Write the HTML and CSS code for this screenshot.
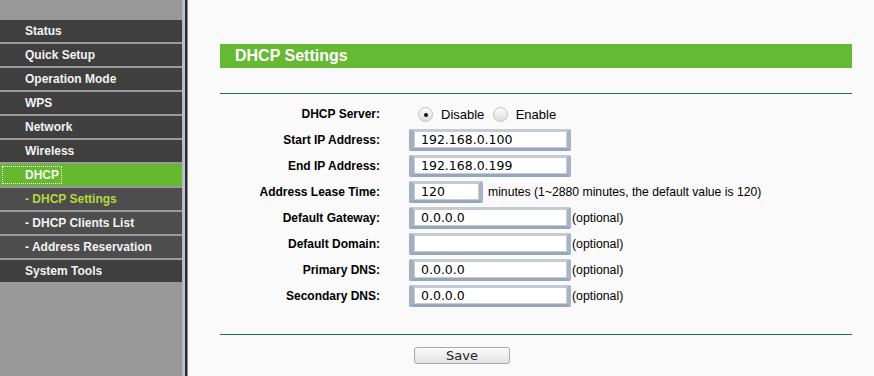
FILE: index.html
```html
<!DOCTYPE html>
<html lang="en">
<head>
  <meta charset="UTF-8">
  <title>DHCP Settings</title>
  <link rel="stylesheet" href="styles.css">
</head>
<body>
  <div class="page">
    <div class="sidebar">
      <ul class="menu">
        <li class="item">Status</li>
        <li class="item">Quick Setup</li>
        <li class="item">Operation Mode</li>
        <li class="item">WPS</li>
        <li class="item">Network</li>
        <li class="item">Wireless</li>
        <li class="item active"><span class="focus">DHCP</span></li>
        <li class="item sub current">- DHCP Settings</li>
        <li class="item sub">- DHCP Clients List</li>
        <li class="item sub">- Address Reservation</li>
        <li class="item">System Tools</li>
      </ul>
    </div>
    <div class="edge"></div>

    <div class="main">
      <div class="title">DHCP Settings</div>
      <hr class="rule">

      <table class="form">
        <tr>
          <td class="label">DHCP Server:</td>
          <td class="value">
            <span class="radio first checked"></span><span class="rtext">Disable</span>
            <span class="radio"></span><span class="rtext">Enable</span>
          </td>
        </tr>
        <tr>
          <td class="label">Start IP Address:</td>
          <td class="value"><input class="field" value="192.168.0.100"></td>
        </tr>
        <tr>
          <td class="label">End IP Address:</td>
          <td class="value"><input class="field" value="192.168.0.199"></td>
        </tr>
        <tr>
          <td class="label">Address Lease Time:</td>
          <td class="value"><input class="field short" value="120"><span class="hint">minutes (1~2880 minutes, the default value is 120)</span></td>
        </tr>
        <tr>
          <td class="label">Default Gateway:</td>
          <td class="value"><input class="field" value="0.0.0.0"><span class="opt">(optional)</span></td>
        </tr>
        <tr>
          <td class="label">Default Domain:</td>
          <td class="value"><input class="field" value=""><span class="opt">(optional)</span></td>
        </tr>
        <tr>
          <td class="label">Primary DNS:</td>
          <td class="value"><input class="field" value="0.0.0.0"><span class="opt">(optional)</span></td>
        </tr>
        <tr>
          <td class="label">Secondary DNS:</td>
          <td class="value"><input class="field" value="0.0.0.0"><span class="opt">(optional)</span></td>
        </tr>
      </table>

      <hr class="rule bottom">
      <div class="actions">
        <button class="save">Save</button>
      </div>
    </div>
  </div>
</body>
</html>
```

FILE: styles.css
```css
html, body {
  margin: 0;
  padding: 0;
  height: 100%;
}
body {
  background-color: #fafafa;
  font-family: 'Liberation Sans', Arial, sans-serif;
  font-size: 12px;
  color: #000;
  overflow: hidden;
}
.page {
  display: flex;
  height: 376px;
}
.sidebar {
  width: 182px;
  background-color: #999999;
  padding-top: 20px;
  box-sizing: border-box;
}
.menu {
  list-style: none;
  margin: 0;
  padding: 0;
}
.item {
  height: 22px;
  line-height: 22px;
  margin-bottom: 2px;
  padding-left: 25px;
  background-color: #3f3f3f;
  color: #f2f2f2;
  font-weight: bold;
  font-size: 12px;
}
.item.sub {
  background-color: #4d4d4d;
}
.item.current {
  color: #b6d73c;
}
.item.active {
  background-color: #66b92f;
  padding-left: 2px;
}
.focus {
  display: inline-block;
  height: 16px;
  line-height: 16px;
  padding: 0 2px 0 22px;
  border: 1px dotted #ffffff;
}
.edge {
  width: 6px;
  background: linear-gradient(to right, #b5b5b5 0, #b5b5b5 1px, #bcc3d0 1px, #bcc3d0 3px, #2e2e2e 3px, #2e2e2e 5px, #8a8a8a 5px);
}
.main {
  flex: 1;
  padding: 44px 22px 0 32px;
}
.title {
  height: 24px;
  line-height: 24px;
  background-color: #66b933;
  color: #ffffff;
  font-weight: bold;
  font-size: 16px;
  padding-left: 15px;
}
.rule {
  border: none;
  border-top: 1px solid #167a3e;
  margin: 25px 0 0 0;
  height: 0;
}
.rule.bottom {
  margin-top: 25px;
}
.form {
  border-collapse: collapse;
  margin-top: 7px;
}
.form td {
  padding: 0;
  height: 26px;
}
.label {
  width: 160px;
  text-align: right;
  font-weight: bold;
  padding-right: 29px !important;
}
.value {
  white-space: nowrap;
  font-size: 12px;
}
.field {
  width: 162px;
  height: 22px;
  box-sizing: border-box;
  border-style: solid;
  border-width: 2px 4px 3px 5px;
  border-color: #c2cad6 #a8b4c6 #98a6ba #a4b0c2;
  border-radius: 2px;
  background-color: #ffffff;
  box-shadow: inset 0 0 0 1px #c6ccd4;
  padding: 0 0 0 7px;
  font-family: 'DejaVu Sans', sans-serif;
  font-size: 12.5px;
  color: #000;
  vertical-align: middle;
}
.field.short {
  width: 74px;
  margin-right: 5px;
}
.opt {
  vertical-align: middle;
  margin-left: 1px;
  font-size: 12.3px;
}
.hint {
  vertical-align: middle;
  font-size: 12.2px;
}
.radio {
  display: inline-block;
  width: 15px;
  height: 15px;
  border-radius: 50%;
  box-sizing: border-box;
  border: 1px solid #c4c4c4;
  background: linear-gradient(#fdfdfd, #dcdcdc);
  vertical-align: middle;
  position: relative;
  margin-left: 5px;
}
.radio.first {
  margin-left: 9px;
}
.radio.checked::after {
  content: "";
  position: absolute;
  left: 5px;
  top: 5px;
  width: 4px;
  height: 4px;
  border-radius: 50%;
  background-color: #111;
}
.rtext {
  font-size: 13px;
  vertical-align: middle;
  margin-left: 8px;
}
.actions {
  padding: 12px 0 0 194px;
}
.save {
  width: 96px;
  height: 17px;
  padding: 1px 0 0 0;
  border: 1px solid #a8a8a8;
  border-radius: 3px;
  background: linear-gradient(#fbfbfb, #e2e2e2);
  font-family: 'DejaVu Sans', sans-serif;
  font-size: 13px;
  line-height: 14px;
  color: #222;
}
```
